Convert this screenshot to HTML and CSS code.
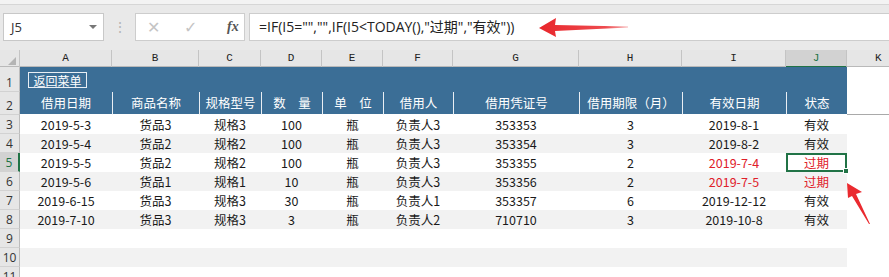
FILE: index.html
```html
<!DOCTYPE html>
<html>
<head>
    <meta charset="UTF-8">
    <link rel="stylesheet" href="styles.css">
</head>
<body>
    <div class="app">
        <div class="topstrip"></div>
        <div class="formula-bar">
            <div class="namebox">
                <span>J5</span>
                <span class="caret"></span>
            </div>
            <div class="grip">⋮</div>
            <div class="fx-buttons">
                <span class="fx-btn">✕</span>
                <span class="fx-btn">✓</span>
                <span class="fx-label">fx</span>
            </div>
            <div class="formula">=IF(I5="","",IF(I5&lt;TODAY(),"过期","有效"))</div>
        </div>

        <div class="sheet">
            <div class="row col-head">
                <div class="corner"><span class="corner-tri"></span></div>
                <div class="ch">A</div>
                <div class="ch">B</div>
                <div class="ch">C</div>
                <div class="ch">D</div>
                <div class="ch">E</div>
                <div class="ch">F</div>
                <div class="ch">G</div>
                <div class="ch">H</div>
                <div class="ch">I</div>
                <div class="ch ch-active">J</div>
                <div class="ch ch-k">K</div>
            </div>

            <div class="row row-title">
                <div class="rh">1</div>
                <div class="title-cell"><button class="back-btn">返回菜单</button></div>
                <div class="cell-k"></div>
            </div>

            <div class="row row-head">
                <div class="rh">2</div>
                <div class="hc">借用日期</div>
                <div class="hc">商品名称</div>
                <div class="hc">规格型号</div>
                <div class="hc">数　量</div>
                <div class="hc">单　位</div>
                <div class="hc">借用人</div>
                <div class="hc">借用凭证号</div>
                <div class="hc">借用期限（月）</div>
                <div class="hc">有效日期</div>
                <div class="hc">状态</div>
                <div class="cell-k head-k"></div>
            </div>

            <div class="row">
                <div class="rh">3</div>
                <div class="c">2019-5-3</div><div class="c">货品3</div><div class="c">规格3</div><div class="c">100</div><div class="c">瓶</div><div class="c">负责人3</div><div class="c">353353</div><div class="c">3</div><div class="c">2019-8-1</div><div class="c">有效</div>
                <div class="cell-k"></div>
            </div>
            <div class="row band">
                <div class="rh">4</div>
                <div class="c">2019-5-4</div><div class="c">货品2</div><div class="c">规格2</div><div class="c">100</div><div class="c">瓶</div><div class="c">负责人3</div><div class="c">353354</div><div class="c">3</div><div class="c">2019-8-2</div><div class="c">有效</div>
                <div class="cell-k"></div>
            </div>
            <div class="row">
                <div class="rh rh-active">5</div>
                <div class="c">2019-5-5</div><div class="c">货品2</div><div class="c">规格2</div><div class="c">100</div><div class="c">瓶</div><div class="c">负责人3</div><div class="c">353355</div><div class="c">2</div><div class="c red">2019-7-4</div><div class="c red selected">过期<span class="handle"></span></div>
                <div class="cell-k"></div>
            </div>
            <div class="row band">
                <div class="rh">6</div>
                <div class="c">2019-5-6</div><div class="c">货品1</div><div class="c">规格1</div><div class="c">10</div><div class="c">瓶</div><div class="c">负责人3</div><div class="c">353356</div><div class="c">2</div><div class="c red">2019-7-5</div><div class="c red">过期</div>
                <div class="cell-k"></div>
            </div>
            <div class="row">
                <div class="rh">7</div>
                <div class="c">2019-6-15</div><div class="c">货品3</div><div class="c">规格3</div><div class="c">30</div><div class="c">瓶</div><div class="c">负责人1</div><div class="c">353357</div><div class="c">6</div><div class="c">2019-12-12</div><div class="c">有效</div>
                <div class="cell-k"></div>
            </div>
            <div class="row band">
                <div class="rh">8</div>
                <div class="c">2019-7-10</div><div class="c">货品3</div><div class="c">规格3</div><div class="c">3</div><div class="c">瓶</div><div class="c">负责人2</div><div class="c">710710</div><div class="c">3</div><div class="c">2019-10-8</div><div class="c">有效</div>
                <div class="cell-k"></div>
            </div>
            <div class="row">
                <div class="rh">9</div>
                <div class="empty"></div>
                <div class="cell-k"></div>
            </div>
            <div class="row band">
                <div class="rh">10</div>
                <div class="empty"></div>
                <div class="cell-k"></div>
            </div>
            <div class="row">
                <div class="rh">11</div>
                <div class="empty"></div>
                <div class="cell-k"></div>
            </div>
        </div>

        <!-- annotation arrows -->
        <svg class="arrows" width="889" height="277" viewBox="0 0 889 277">
            <defs>
                <linearGradient id="fade1" x1="0" y1="0" x2="1" y2="0">
                    <stop offset="0" stop-color="#e8262b"/>
                    <stop offset="0.75" stop-color="#ee4b4f"/>
                    <stop offset="1" stop-color="#f6b5b6"/>
                </linearGradient>
            </defs>
            <path d="M539 28 L556 18 L555 25 L628 26.5 L628 27.5 L555 31 L556 37 Z" fill="url(#fade1)"/>
            <path d="M847 183 L862 192 L856 194 L870 224 L869 224 L852 196 L848 198 Z" fill="#ea2a2f"/>
        </svg>
    </div>
</body>
</html>
```

FILE: styles.css
```css
* {
    margin: 0;
    padding: 0;
    box-sizing: border-box;
}

body {
    width: 889px;
    height: 277px;
    overflow: hidden;
    background: #fff;
    font-family: "Noto Sans CJK SC", "Noto Sans", sans-serif;
}

.app {
    position: relative;
    width: 889px;
    height: 277px;
    overflow: hidden;
}

.topstrip {
    height: 5px;
    background: #f3f3f3;
    border-bottom: 1px solid #d6d6d6;
}

.formula-bar {
    height: 45px;
    background: #e9e9e9;
    display: flex;
    align-items: flex-start;
    padding: 8px 0 0 3px;
}

.namebox {
    width: 101px;
    height: 28px;
    background: #fff;
    border: 1px solid #c8c8c8;
    display: flex;
    align-items: center;
    justify-content: space-between;
    padding: 0 6px 0 7px;
    font-family: "Open Sans", "Noto Sans", sans-serif;
    font-size: 13px;
    color: #333;
}

.caret {
    width: 0;
    height: 0;
    border-left: 4px solid transparent;
    border-right: 4px solid transparent;
    border-top: 4px solid #777;
}

.grip {
    width: 31px;
    height: 28px;
    line-height: 27px;
    text-align: center;
    color: #b5b5b5;
    font-size: 14px;
}

.fx-buttons {
    width: 110px;
    height: 28px;
    background: #fff;
    border: 1px solid #cdcdcd;
    display: flex;
    align-items: center;
    padding-left: 11px;
}

.fx-btn {
    width: 37px;
    color: #c4c4c4;
    font-size: 16px;
    font-family: "DejaVu Sans", sans-serif;
}

.fx-label {
    font-family: "Liberation Serif", serif;
    font-style: italic;
    font-weight: bold;
    font-size: 14px;
    color: #555;
    margin-left: 6px;
}

.formula {
    flex: 1;
    height: 28px;
    margin-left: 4px;
    background: #fff;
    border: 1px solid #cdcdcd;
    border-right: none;
    padding-left: 9px;
    line-height: 26px;
    font-family: "Open Sans", "Noto Sans CJK SC", sans-serif;
    font-size: 14px;
    color: #222;
}

/* sheet */
.sheet {
    font-size: 12px;
    color: #1a1a1a;
}

.row {
    display: grid;
    grid-template-columns: 20px 92px 87px 62px 61px 61px 70px 126px 103px 104px 61px 1fr;
    height: 19px;
}

.row.band .c,
.row.band .empty {
    background: #f2f2f2;
}

.col-head {
    height: 17px;
    background: #e6e6e6;
    border-bottom: 1px solid #b9b9b9;
}

.corner {
    position: relative;
    border-right: 1px solid #c4c4c4;
}

.corner-tri {
    position: absolute;
    right: 3px;
    bottom: 3px;
    width: 0;
    height: 0;
    border-left: 8px solid transparent;
    border-bottom: 8px solid #b4b4b4;
}

.ch {
    border-right: 1px solid #c4c4c4;
    text-align: center;
    font-family: "Liberation Mono", monospace;
    font-size: 11px;
    line-height: 17px;
    color: #222;
}

.ch-k {
    border-right: none;
    text-align: left;
    padding-left: 28px;
}

.ch-active {
    background: #d2d2d2;
    border-bottom: 2px solid #217346;
    color: #217346;
    line-height: 16px;
}

.rh {
    background: #e6e6e6;
    border-right: 1px solid #bcbcbc;
    border-bottom: 1px solid #d2d2d2;
    font-family: "Open Sans", sans-serif;
    font-size: 12px;
    color: #333;
    display: flex;
    align-items: flex-end;
    justify-content: center;
    line-height: 16px;
}

.rh-active {
    background: #d2d2d2;
    border-right: 2px solid #217346;
    color: #217346;
}

.row-title {
    height: 25px;
}

.title-cell {
    grid-column: 2 / 12;
    background: #3b6e96;
    padding: 5px 0 0 8px;
}

.back-btn {
    display: block;
    width: 59px;
    height: 16px;
    background: #3b6e96;
    border: 1px solid #e8eef4;
    color: #fff;
    font-family: "Noto Sans CJK SC", sans-serif;
    font-size: 12px;
    line-height: 13px;
}

.row-head {
    height: 23px;
}

.hc {
    background: #3b6e96;
    color: #fff;
    border-left: 1px solid #e9eef3;
    border-bottom: 1px solid #ffffff;
    text-align: center;
    line-height: 22px;
    font-size: 12.5px;
}

.hc:nth-child(2) {
    border-left: none;
}

.head-k {
    border-bottom: 1px solid #a9a9a9;
}

.c {
    text-align: center;
    line-height: 19px;
    white-space: nowrap;
    font-size: 12.5px;
}

.c.red {
    color: #e0202a;
}

.selected {
    position: relative;
    border: 2px solid #217346;
    line-height: 15px;
}

.handle {
    position: absolute;
    right: -4px;
    bottom: -4px;
    width: 6px;
    height: 6px;
    background: #217346;
    border: 1px solid #fff;
}

.empty {
    grid-column: 2 / 12;
}

.cell-k {
    background: #fff;
}

.arrows {
    position: absolute;
    left: 0;
    top: 0;
    pointer-events: none;
}
```
